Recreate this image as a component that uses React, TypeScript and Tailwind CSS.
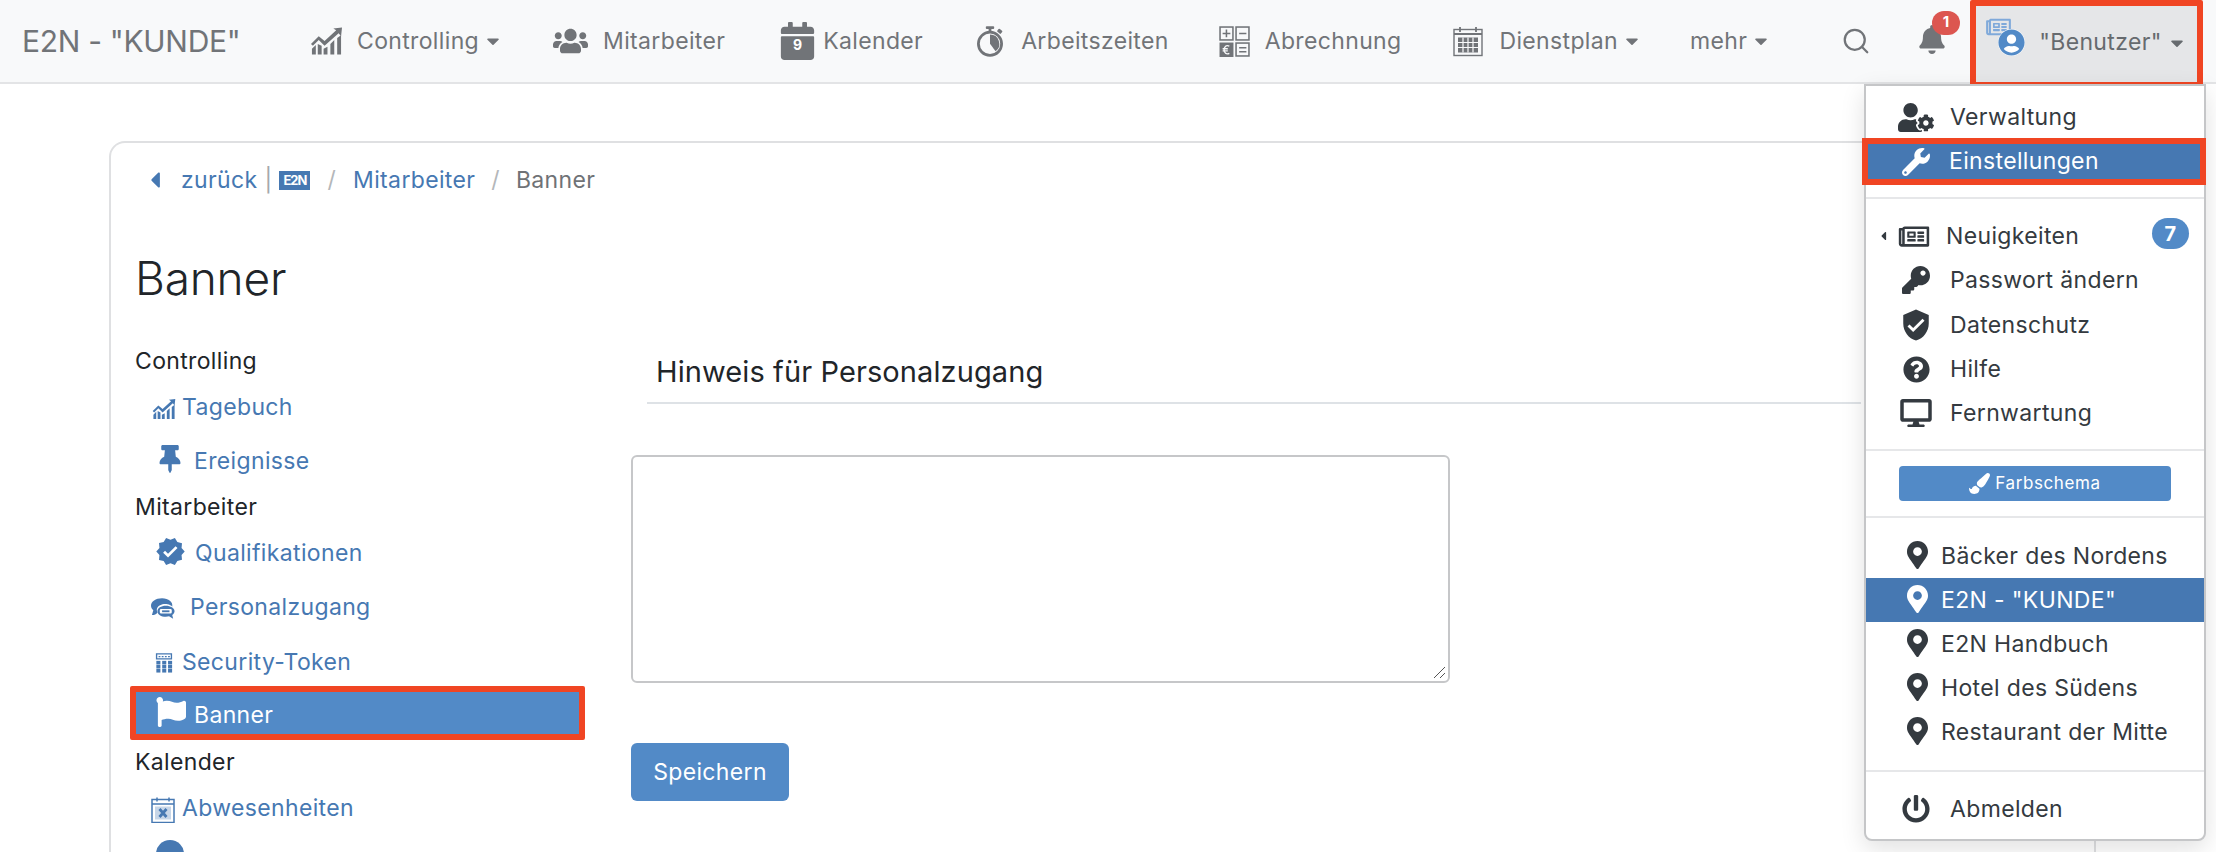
import React from "react";
import { Search } from "lucide-react";
import { FaUsers, FaCalendar, FaBell, FaUserCircle, FaRegNewspaper, FaUserCog, FaWrench, FaKey, FaQuestionCircle, FaDesktop, FaPaintBrush, FaMapMarkerAlt, FaPowerOff, FaThumbtack, FaFlag, FaCaretLeft, FaCaretDown } from "react-icons/fa";
import { MdVerifiedUser, MdVerified } from "react-icons/md";

const ChartIcon = ({ className }: { className?: string }) => (
  <svg viewBox="0 0 34 28" className={className} fill="currentColor">
    <path d="M1 17 L9 9 L15 14 L27 3 L24 1 L33 0 L32 9 L29.500 6 L15 19 L9 13 L3 19Z" />
    <path d="M2 28V22L6 18V28ZM8 28V17L12 19V28ZM14 28V22L18 20V28ZM21 28V17L25 13V28ZM28 28V11L32 8V28Z" />
  </svg>
);
const WatchIcon = ({ className }: { className?: string }) => (
  <svg viewBox="0 0 28 33" className={className} fill="currentColor">
    <rect x="9.500" y="0" width="9" height="3" rx="1" />
    <rect x="12.500" y="2" width="3" height="4" />
    <rect x="22" y="3.500" width="5" height="4" rx="1" transform="rotate(40 24.500 5.500)" />
    <circle cx="14" cy="19" r="12.500" fill="none" stroke="currentColor" strokeWidth="3" />
    <path d="M14 9a10 10 0 0 1 6 18L14 19Z" />
  </svg>
);
const CalcIcon = ({ className }: { className?: string }) => (
  <svg viewBox="0 0 30 30" className={className}>
    <g fill="none" stroke="currentColor" strokeWidth="1.500">
      <rect x="1" y="1" width="12.500" height="12.500" /><rect x="16.500" y="1" width="12.500" height="12.500" /><rect x="16.500" y="16.500" width="12.500" height="12.500" />
      <path d="M7.200 3.500v7.500M3.500 7.200h7.500M19.500 7.200h7M19.500 21h7M19.500 25h7" />
    </g>
    <rect x="0.500" y="16" width="13.500" height="14" fill="currentColor" />
    <path d="M10 19.500c-3-1.500-5 .5-5 3.500s2 5 5 3.500M3.500 22h5M3.500 24h5" fill="none" stroke="#f8f9fa" strokeWidth="1.300" />
  </svg>
);
const PlanIcon = ({ className }: { className?: string }) => (
  <svg viewBox="0 0 30 30" className={className}>
    <g fill="none" stroke="currentColor" strokeWidth="1.400">
      <rect x="1" y="3" width="28" height="26" /><path d="M1 7.500h28M7 0.500v5M23 0.500v5" strokeWidth="1.800" />
    </g>
    <rect x="5" y="11" width="20" height="15" fill="currentColor" />
    <path d="M5 16h20M5 21h20M10 11v15M15 11v15M20 11v15" stroke="#f8f9fa" strokeWidth="1.200" />
  </svg>
);
const ChatIcon = ({ className }: { className?: string }) => (
  <svg viewBox="0 0 26 22" className={className} fill="currentColor">
    <path d="M12 0C5 0 0 3.500 0 8c0 2 1 3.500 2.500 5L1 18c3 0 4.500-1 6-2.500C6.500 14 6 12.500 6.500 11 8 7.500 13 5.500 18 6.500c2 .4 4 1.300 5 2.500C24 4 19 0 12 0Z" />
    <path fillRule="evenodd" d="M16 8c-5 0-9 2.500-9 6s4 6 9 6c1.300 0 2.500-.2 3.500-.5L24 22l-1-4c1.500-1 2.500-2.500 2.500-4 0-3.500-4.500-6-9.500-6Zm-5 3.500h10a1.500 1.500 0 0 1 1.500 1.500v2a1.500 1.500 0 0 1-1.500 1.500H11A1.500 1.500 0 0 1 9.500 15v-2a1.500 1.500 0 0 1 1.500-1.500Z" />
    <rect x="12" y="13" width="8" height="2" />
  </svg>
);
const TokenIcon = ({ className }: { className?: string }) => (
  <svg viewBox="0 0 20 24" className={className} fill="currentColor">
    <path fillRule="evenodd" d="M1 0h18v7H1Zm1.500 1.500v4h15v-4Z" />
    <path d="M4 3h2v1.500H4ZM7.500 3h2v1.500h-2ZM11 3h2v1.500h-2ZM14.500 3h2v1.500h-2Z" />
    {[8.500, 13, 17.500].map((y) => [1.500, 8, 14.500].map((x) => <rect key={`${x}-${y}`} x={x} y={y} width="4.500" height="4" />))}
  </svg>
);
const AbsentIcon = ({ className }: { className?: string }) => (
  <svg viewBox="0 0 24 26" className={className}>
    <g fill="none" stroke="currentColor" strokeWidth="1.500"><rect x="1" y="2.500" width="22" height="23" /><path d="M1 7h22M6 0.500v4M18 0.500v4" /></g>
    <rect x="4" y="9.500" width="16" height="13" fill="currentColor" fillOpacity="0.300" />
    <path d="M8.500 12l7 8M15.500 12l-7 8" stroke="currentColor" strokeWidth="2.800" />
  </svg>
);

const Caret = ({ className = "" }: { className?: string }) => <FaCaretDown className={`w-[20px] h-[20px] ${className}`} />;

const NavItem = ({ icon, label, caret, className = "" }: { icon?: React.ReactNode; label: string; caret?: boolean; className?: string }) => (
  <div className={`flex items-center ${className}`}>
    {icon}
    <span>{label}</span>
    {caret && <Caret className="ml-[4px]" />}
  </div>
);

const MenuItem = ({ icon, label, active, className = "" }: { icon: React.ReactNode; label: string; active?: boolean; className?: string }) => (
  <div className={`h-[44px] flex items-center pl-[34px] shrink-0 ${active ? "bg-[#4678b2] text-white" : ""} ${className}`}>
    <span className="w-[52px] flex justify-center shrink-0 -ml-[10px] mr-[8px]">{icon}</span>
    <span>{label}</span>
  </div>
);

const Pin = ({ label, active }: { label: string; active?: boolean }) => (
  <div className={`h-[44px] flex items-center pl-[41px] ${active ? "bg-[#4678b2] text-white" : ""}`}>
    <FaMapMarkerAlt className="w-[21px] h-[28px] mr-[13px] shrink-0 -mt-[3px]" />
    <span>{label}</span>
  </div>
);

const SideHead = ({ label, className = "" }: { label: string; className?: string }) => (
  <div className={`text-[#212529] flex items-center ${className}`}>{label}</div>
);

const SideLink = ({ icon, label, className = "" }: { icon: React.ReactNode; label: string; className?: string }) => (
  <div className={`flex items-center text-[#4678b2] ${className}`}>{icon}<span>{label}</span></div>
);

export default function App() {
  return (
    <div className="relative h-[852px] w-[2216px] overflow-hidden bg-white font-['Inter','Liberation_Sans',sans-serif] text-[23px] tracking-[0.35px]">
      <nav className="h-[84px] bg-[#f8f9fa] border-b-2 border-[#e3e4e6] flex items-center pl-[22px] text-[#717478]">
        <span className="text-[30px] tracking-[-0.3px] w-[218px] shrink-0 whitespace-nowrap">E2N - "KUNDE"</span>
        <NavItem className="ml-[70px]" icon={<ChartIcon className="w-[33px] h-[28px] mr-[14px]" />} label="Controlling" caret />
        <NavItem className="ml-[50px]" icon={<FaUsers className="w-[35px] h-[28px] mr-[15px]" />} label="Mitarbeiter" />
        <NavItem className="ml-[55px]" icon={
          <span className="relative mr-[8px] flex">
            <FaCalendar className="w-[35px] h-[38px]" />
            <span className="absolute left-0 right-0 top-[13px] text-center text-white text-[14px] font-bold leading-[20px]">9</span>
          </span>} label="Kalender" />
        <NavItem className="ml-[54px]" icon={<WatchIcon className="w-[26px] h-[31px] mr-[18px]" />} label="Arbeitszeiten" />
        <NavItem className="ml-[50px]" icon={<CalcIcon className="w-[31px] h-[31px] mr-[15px]" />} label="Abrechnung" />
        <NavItem className="ml-[52px]" icon={<PlanIcon className="w-[30px] h-[31px] mr-[16px]" />} label="Dienstplan" caret />
        <NavItem className="ml-[48px]" label="mehr" caret />
        <Search className="ml-[70px] w-[30px] h-[30px]" strokeWidth={1.800} />
        <span className="relative ml-[48px] flex">
          <FaBell className="w-[26px] h-[29px] -mt-[4px]" />
          <span className="absolute -top-[18px] left-[13px] w-[28px] h-[24px] rounded-full bg-[#dc5650] text-white text-[15px] font-bold flex items-center justify-center">1</span>
        </span>
        <div className="relative ml-[25px] w-[233px] h-[88px] self-start border-[6px] border-[#f04523] bg-[#e5e6e8] text-[#666a6e] flex items-center rounded-[2px]">
          <FaRegNewspaper className="absolute left-[9px] top-[10px] w-[27px] h-[22px] text-[#7fa9da]" />
          <span className="relative ml-[22px] w-[27px] h-[27px] rounded-full bg-white flex mt-[-4px] shrink-0">
            <FaUserCircle className="w-[27px] h-[27px] text-[#528ac7]" />
          </span>
          <span className="ml-[14px] mt-[-4px] whitespace-nowrap">"Benutzer"</span>
          <Caret className="ml-[5px] mt-[-2px]" />
        </div>
      </nav>

      <main className="ml-[109px] mt-[57px] w-[1987px] h-[800px] border-2 border-b-0 border-[#dfe0e2] rounded-t-[16px] pt-[24px] pl-[24px]">
        <div className="flex items-center h-[26px] text-[#4678b2] ml-[-24px] pl-[35px]">
          <FaCaretLeft className="w-[18px] h-[26px] mr-[17px]" />
          <span>zurück</span>
          <span className="mx-[7px] text-[#a5a8ab]">|</span>
          <span className="w-[31px] h-[19px] bg-[#4678b2] text-white text-[13px] font-bold leading-[19px] text-center tracking-[-1px]">E2N</span>
          <span className="mx-[17px] text-[#b4b7ba]">/</span>
          <span>Mitarbeiter</span>
          <span className="mx-[16px] text-[#b4b7ba]">/</span>
          <span className="text-[#6f7276]">Banner</span>
        </div>
        <h1 className="mt-[55px] text-[#212529] text-[46px] leading-[60px] font-light tracking-[-0.2px]">Banner</h1>
        <div className="flex mt-[38px]">
          <aside className="w-[496px] shrink-0 flex flex-col">
            <SideHead label="Controlling" className="h-[30px]" />
            <SideLink className="mt-[16px] h-[30px] pl-[17px]" icon={<ChartIcon className="w-[24px] h-[20px] mr-[6px] mt-[3px]" />} label="Tagebuch" />
            <SideLink className="mt-[24px] h-[30px] pl-[24px]" icon={<FaThumbtack className="w-[22px] h-[28px] mr-[13px] -mt-[5px]" />} label="Ereignisse" />
            <SideHead label="Mitarbeiter" className="mt-[16px] h-[30px]" />
            <SideLink className="mt-[16px] h-[30px] pl-[20px]" icon={<MdVerified className="w-[31px] h-[31px] mr-[9px] -mt-[4px]" />} label="Qualifikationen" />
            <SideLink className="mt-[24px] h-[30px] pl-[16px]" icon={<ChatIcon className="w-[24px] h-[21px] mr-[15px] mt-[3px]" />} label="Personalzugang" />
            <SideLink className="mt-[25px] h-[30px] pl-[20px]" icon={<TokenIcon className="w-[18px] h-[24px] mr-[9px] mt-[3px]" />} label="Security-Token" />
            <div className="mt-[9px] ml-[-5px] w-[455px] h-[54px] border-[6px] border-[#f04523] bg-[#528ac7] text-white flex items-center pl-[20px] rounded-[2px]">
              <FaFlag className="w-[30px] h-[30px] mr-[8px] -mt-[2px]" />
              <span className="mt-[5px]">Banner</span>
            </div>
            <SideHead label="Kalender" className="mt-[7px] h-[30px]" />
            <SideLink className="mt-[16px] h-[30px] pl-[16px]" icon={<AbsentIcon className="w-[24px] h-[26px] mr-[7px] mt-[3px]" />} label="Abwesenheiten" />
            <div className="mt-[17px] ml-[21px] w-[28px] h-[28px] rounded-full bg-[#4678b2]" />
          </aside>
          <section className="flex-1">
            <div className="ml-[16px] mr-[233px] h-[60px] -mt-[2px] border-b-2 border-[#dee2e6] pl-[9px] pt-[8px] text-[#212529] text-[29px] tracking-[0.1px] leading-[40px]">Hinweis für Personalzugang</div>
            <div className="mt-[51px] w-[819px] h-[228px] border-2 border-[#c6c7c9] rounded-[6px] relative">
              <svg viewBox="0 0 14 14" className="absolute right-[2px] bottom-[2px] w-[14px] h-[14px]" stroke="#555"><path d="M13 2 2 13M13 8l-5 5" /></svg>
            </div>
            <div className="mt-[60px] w-[158px] h-[58px] rounded-[6px] bg-[#528ac7] text-white flex items-center justify-center">Speichern</div>
          </section>
        </div>
      </main>

      <div className="absolute left-[1864px] top-[84px] w-[342px] h-[757px] bg-white border-2 border-[#c5c6c8] rounded-b-[8px] shadow-[0_8px_24px_rgba(0,0,0,0.12)] text-[#343a40] flex flex-col">
        <MenuItem className="mt-[9px]" icon={<FaUserCog className="w-[36px] h-[29px]" />} label="Verwaltung" />
        <div className="relative mt-[-1px] ml-[-4px] h-[47px] w-[344px] border-[6px] border-[#f04523] bg-[#4678b2] text-white flex items-center pl-[31px] shrink-0">
          <span className="w-[52px] flex justify-center -ml-[9px] mr-[7px]"><FaWrench className="w-[28px] h-[28px]" /></span>
          <span>Einstellungen</span>
        </div>
        <div className="mt-[12px] h-[2px] bg-[#e6e7e9] shrink-0" />
        <div className="relative h-[44px] mt-[15px] flex items-center pl-[14px] shrink-0">
          <FaCaretLeft className="w-[7px] h-[14px] mr-[9px]" />
          <FaRegNewspaper className="w-[36px] h-[27px] mr-[14px]" />
          <span>Neuigkeiten</span>
          <span className="absolute right-[15px] top-[4px] w-[37px] h-[31px] rounded-full bg-[#528ac7] text-white text-[20px] font-bold flex items-center justify-center">7</span>
        </div>
        <MenuItem icon={<FaKey className="w-[28px] h-[28px]" />} label="Passwort ändern" />
        <MenuItem className="mt-[1px]" icon={<MdVerifiedUser className="w-[34px] h-[34px]" />} label="Datenschutz" />
        <MenuItem icon={<FaQuestionCircle className="w-[27px] h-[27px]" />} label="Hilfe" />
        <MenuItem icon={<FaDesktop className="w-[32px] h-[28px]" />} label="Fernwartung" />
        <div className="mt-[14px] h-[2px] bg-[#e6e7e9] shrink-0" />
        <div className="mt-[15px] mx-[33px] h-[35px] rounded-[4px] bg-[#528ac7] text-white text-[17px] tracking-[0.6px] flex items-center justify-center shrink-0">
          <FaPaintBrush className="w-[21px] h-[21px] mr-[5px]" />Farbschema
        </div>
        <div className="mt-[15px] h-[2px] bg-[#e6e7e9] shrink-0" />
        <div className="mt-[16px]">
          <Pin label="Bäcker des Nordens" />
          <Pin label={'E2N - "KUNDE"'} active />
          <Pin label="E2N Handbuch" />
          <Pin label="Hotel des Südens" />
          <Pin label="Restaurant der Mitte" />
        </div>
        <div className="mt-[16px] h-[2px] bg-[#e6e7e9] shrink-0" />
        <MenuItem className="mt-[15px]" icon={<FaPowerOff className="w-[28px] h-[28px]" />} label="Abmelden" />
      </div>
    </div>
  );
}
